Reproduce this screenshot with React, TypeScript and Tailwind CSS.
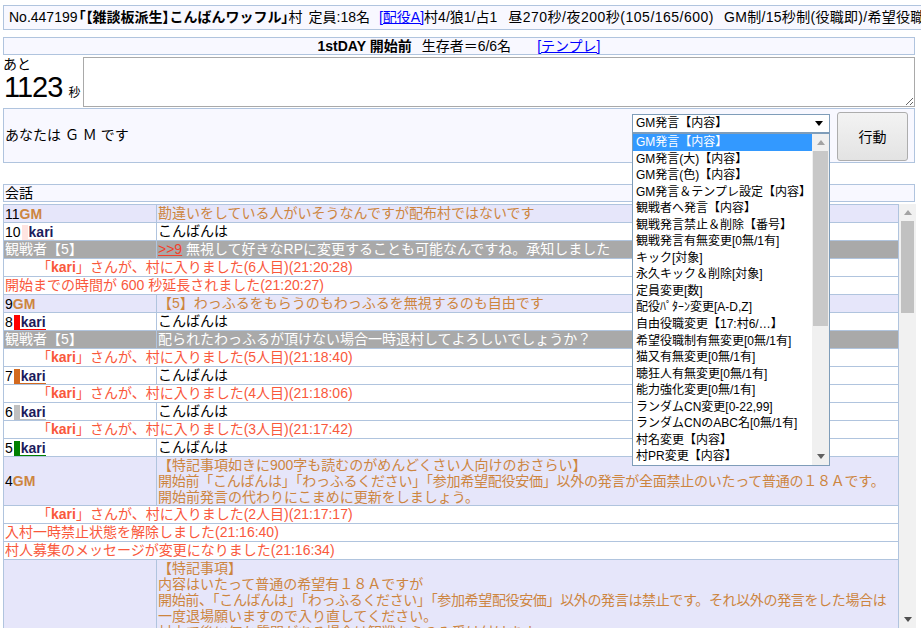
import React from "react";

const FONT = "font-['Liberation_Sans','Noto_Sans_CJK_JP',sans-serif]";
const ORANGE = "text-[#cd853f]";
const RED = "text-[#f9583c]";

const items = [
  "GM発言【内容】",
  "GM発言(大)【内容】",
  "GM発言(色)【内容】",
  "GM発言＆テンプレ設定【内容】",
  "観戦者へ発言【内容】",
  "観戦発言禁止＆削除【番号】",
  "観戦発言有無変更[0無/1有]",
  "キック[対象]",
  "永久キック＆削除[対象]",
  "定員変更[数]",
  "配役ﾊﾟﾀｰﾝ変更[A-D,Z]",
  "自由役職変更【17:村6/…】",
  "希望役職制有無変更[0無/1有]",
  "猫又有無変更[0無/1有]",
  "聴狂人有無変更[0無/1有]",
  "能力強化変更[0無/1有]",
  "ランダムCN変更[0-22,99]",
  "ランダムCNのABC名[0無/1有]",
  "村名変更【内容】",
  "村PR変更【内容】",
];

function Up({ color }: { color: string }) {
  return (
    <svg width="8" height="5" viewBox="0 0 8 5">
      <path d="M0 5L4 0L8 5Z" fill={color} />
    </svg>
  );
}

function Down({ color }: { color: string }) {
  return (
    <svg width="8" height="5" viewBox="0 0 8 5">
      <path d="M0 0L8 0L4 5Z" fill={color} />
    </svg>
  );
}

function Kari({ cls }: { cls: string }) {
  return (
    <span
      className={`ml-[1px] inline-block h-[15px] border-b border-l-[6px] pl-[1px] text-[14px] leading-[14px] font-bold text-[#1b1b5c] ${cls}`}
    >
      kari
    </span>
  );
}

function SayRow({
  bg,
  left,
  children,
  multi,
}: {
  bg: string;
  left: React.ReactNode;
  children: React.ReactNode;
  multi?: boolean;
}) {
  return (
    <div className={`flex border-b border-[#b0c4de] ${bg}`}>
      <div
        className={`flex min-h-[17px] w-[153px] shrink-0 border-r border-[#b0c4de] pl-[1px] ${
          multi ? "items-center" : "items-end"
        }`}
      >
        {left}
      </div>
      <div
        className={`min-w-0 flex-1 overflow-hidden whitespace-nowrap pl-[1px] ${
          multi ? "leading-[16px]" : "leading-[17px]"
        }`}
      >
        {children}
      </div>
    </div>
  );
}

function SysRow({ indent, children }: { indent?: boolean; children: React.ReactNode }) {
  return (
    <div
      className={`h-[18px] whitespace-nowrap border-b border-[#b0c4de] bg-white leading-[17px] ${RED} ${
        indent ? "pl-[33px]" : "pl-[1px]"
      }`}
    >
      {children}
    </div>
  );
}

function GMLeft({ n }: { n: string }) {
  return (
    <span className="leading-[16px]">
      {n}
      <span className={`font-bold ${ORANGE}`}>GM</span>
    </span>
  );
}

function KariLeft({ n, cls }: { n: string; cls: string }) {
  return (
    <>
      <span className="leading-[16px]">{n}</span>
      <Kari cls={cls} />
    </>
  );
}

function Entered({ n, t }: { n: string; t: string }) {
  return (
    <SysRow indent>
      「<b>kari</b>」さんが、村に入りました({n}人目)({t})
    </SysRow>
  );
}

export default function App() {
  return (
    <div
      className={`relative h-[634px] w-[921px] overflow-hidden bg-white pl-[3px] pt-[5px] text-[14px] text-black ${FONT}`}
    >
      {/* Row 1: village info */}
      <div className="h-[25px] w-[1400px] whitespace-nowrap border border-[#b0c4de] bg-[#f8f8ff] pl-[5px] leading-[23px]">
        <span>No.447199</span>
        <b className="ml-[1px]">
          <span className="[font-feature-settings:'palt']">「【</span>雑談板派生
          <span className="[font-feature-settings:'palt']">】</span>こんばんワッフル
          <span className="[font-feature-settings:'palt']">」</span>
        </b>
        <span>村</span>
        <span className="ml-[6px]">定員:18名</span>
        <a className="ml-[9px] text-[#0000ff] underline">[配役A]</a>
        <span>村4/狼1/占1</span>
        <span className="ml-[11px] tracking-[0.5px]">昼270秒/夜200秒(105/165/600)</span>
        <span className="ml-[10px] tracking-[0.3px]">GM制/15秒制(役職即)/希望役職制/猫又無/聴狂人無</span>
      </div>

      {/* Row 2: day */}
      <div className="mt-[7px] h-[18px] w-[912px] whitespace-nowrap border border-[#b0c4de] bg-[#f8f8ff] text-center leading-[16px]">
        <b>1stDAY 開始前</b>
        <span className="ml-[10px]">生存者＝6/6名</span>
        <a className="ml-[26px] text-[#0000ff] underline">[テンプレ]</a>
      </div>

      {/* Row 3: timer + textarea */}
      <div className="mt-[2px] flex">
        <div className="w-[80px] shrink-0">
          <div className="text-[14px] leading-[14px]">あと</div>
          <div className="mt-[4px] flex items-baseline">
            <span className="pl-[1px] text-[29px] leading-[24px] tracking-[-1px]">1123</span>
            <span className="ml-[6px] text-[12px] leading-[12px]">秒</span>
          </div>
        </div>
        <textarea className="block h-[50px] w-[832px] border border-[#a9a9a9] bg-white" />
      </div>

      {/* Row 4: action */}
      <div className="mt-[1px] flex h-[55px] w-[912px] items-start border border-[#b0c4de] bg-[#f8f8ff] pr-[6px]">
        <span className="self-center pl-[1px]">あなたは Ｇ Ｍ です</span>
        <div className="ml-auto mt-[5px] flex h-[19px] w-[198px] items-center justify-between border border-[#7f9db9] bg-white pl-[3px] pr-[6px] text-[12px] leading-[17px]">
          <span>GM発言【内容】</span>
          <Down color="#000" />
        </div>
        <button className="ml-[7px] mt-[3px] h-[49px] w-[71px] rounded-[3px] border border-[#adadad] bg-linear-to-b from-[#f3f3f3] to-[#e3e3e3] text-[14px] leading-[16px]">
          行動
        </button>
      </div>

      {/* Row 5: header */}
      <div className="mt-[21px] h-[18px] w-[912px] border border-[#b0c4de] bg-[#f8f8ff] pl-[1px] leading-[16px]">
        会話
      </div>

      {/* Log */}
      <div className="mt-[2px] flex h-[424px] w-[913px] overflow-hidden">
        <div className="w-[896px] shrink-0 overflow-hidden border-x border-t border-[#b0c4de]">
          <SayRow bg="bg-[#e6e6fa]" left={<GMLeft n="11" />}>
            <span className={ORANGE}>勘違いをしている人がいそうなんですが配布村ではないです</span>
          </SayRow>
          <SayRow bg="bg-white" left={<KariLeft n="10" cls="border-[#ffe4e1]" />}>
            こんばんは
          </SayRow>
          <SayRow bg="bg-[#a9a9a9]" left={<span className="leading-[17px] text-white">観戦者【5】</span>}>
            <span className="text-[#f2402c] underline">&gt;&gt;9</span>
            <span className="text-white"> 無視して好きなRPに変更することも可能なんですね。承知しました</span>
          </SayRow>
          <Entered n="6" t="21:20:28" />
          <SysRow>開始までの時間が 600 秒延長されました(21:20:27)</SysRow>
          <SayRow bg="bg-[#e6e6fa]" left={<GMLeft n="9" />}>
            <span className={ORANGE}>【5】わっふるをもらうのもわっふるを無視するのも自由です</span>
          </SayRow>
          <SayRow bg="bg-white" left={<KariLeft n="8" cls="border-[#ff0000]" />}>
            こんばんは
          </SayRow>
          <SayRow bg="bg-[#a9a9a9]" left={<span className="leading-[17px] text-white">観戦者【5】</span>}>
            <span className="text-white">配られたわっふるが頂けない場合一時退村してよろしいでしょうか？</span>
          </SayRow>
          <Entered n="5" t="21:18:40" />
          <SayRow bg="bg-white" left={<KariLeft n="7" cls="border-[#d2691e]" />}>
            こんばんは
          </SayRow>
          <Entered n="4" t="21:18:06" />
          <SayRow bg="bg-white" left={<KariLeft n="6" cls="border-[#c0c0c0]" />}>
            こんばんは
          </SayRow>
          <Entered n="3" t="21:17:42" />
          <SayRow bg="bg-white" left={<KariLeft n="5" cls="border-[#008000]" />}>
            こんばんは
          </SayRow>
          <SayRow bg="bg-[#e6e6fa]" multi left={<GMLeft n="4" />}>
            <div className={ORANGE}>【特記事項如きに900字も読むのがめんどくさい人向けのおさらい】</div>
            <div className={`${ORANGE} tracking-[-0.25px]`}>
              開始前「こんばんは」「わっふるください」「参加希望配役安価」以外の発言が全面禁止のいたって普通の１８Ａです。
            </div>
            <div className={ORANGE}>開始前発言の代わりにこまめに更新をしましょう。</div>
          </SayRow>
          <Entered n="2" t="21:17:17" />
          <SysRow>入村一時禁止状態を解除しました(21:16:40)</SysRow>
          <SysRow>村人募集のメッセージが変更になりました(21:16:34)</SysRow>
          <SayRow bg="bg-[#e6e6fa]" multi left={<span />}>
            <div className={ORANGE}>【特記事項】</div>
            <div className={ORANGE}>内容はいたって普通の希望有１８Ａですが</div>
            <div className={`${ORANGE} tracking-[-0.35px]`}>
              開始前、「こんばんは」「わっふるください」「参加希望配役安価」以外の発言は禁止です。それ以外の発言をした場合は
            </div>
            <div className={ORANGE}>一度退場願いますので入り直してください。</div>
            <div className={ORANGE}>村立て後に何か質問がある場合は観戦からのみ受け付けます。</div>
            <div className={ORANGE}>よろしくお願いします。</div>
          </SayRow>
        </div>
        {/* scrollbar */}
        <div className="flex w-[17px] shrink-0 flex-col bg-[#f1f1f1]">
          <div className="flex h-[17px] items-center justify-center">
            <Up color="#a3a3a3" />
          </div>
          <div className="mx-[2px] h-[92px] bg-[#c1c1c1]" />
          <div className="flex-1" />
          <div className="flex h-[17px] items-center justify-center">
            <Down color="#505050" />
          </div>
        </div>
      </div>

      {/* Open dropdown list */}
      <div className="absolute left-[632px] top-[133px] z-10 flex h-[333px] w-[198px] border border-[#7f9db9] bg-white">
        <div className="min-w-0 flex-1 overflow-hidden">
          {items.map((t, i) => (
            <div
              key={i}
              className={`h-[16.55px] whitespace-nowrap pl-[3px] text-[12px] leading-[16.55px] ${
                i === 0 ? "bg-[#3399ff] text-white" : "text-black"
              }`}
            >
              {t}
            </div>
          ))}
        </div>
        <div className="flex w-[17px] shrink-0 flex-col bg-[#f0f0f0]">
          <div className="flex h-[17px] items-center justify-center">
            <Up color="#a3a3a3" />
          </div>
          <div className="mx-[1px] h-[175px] bg-[#c8c8c8]" />
          <div className="flex-1" />
          <div className="flex h-[17px] items-center justify-center">
            <Down color="#606060" />
          </div>
        </div>
      </div>
    </div>
  );
}
